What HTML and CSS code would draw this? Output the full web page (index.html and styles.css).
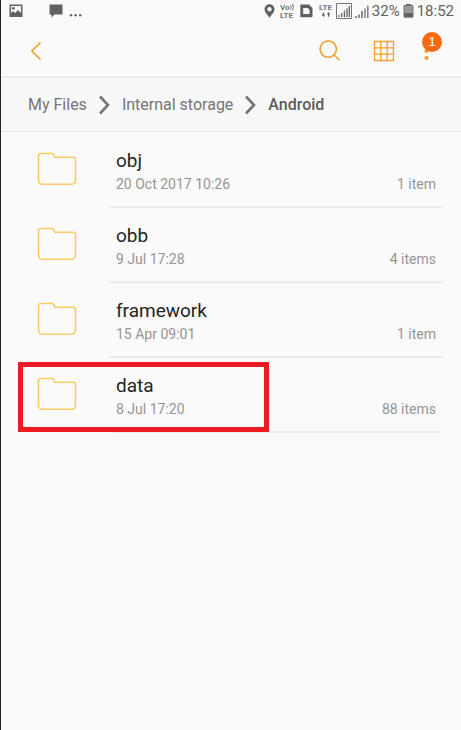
FILE: index.html
```html
<!DOCTYPE html>
<html lang="en">
<head>
    <meta charset="UTF-8">
    <meta name="viewport" content="width=device-width, initial-scale=1.0">
    <title>My Files</title>
    <link rel="stylesheet" href="styles.css">
</head>
<body>
    <!-- Shared shapes -->
    <svg class="sprite" aria-hidden="true">
        <symbol id="folder" viewBox="0 0 40 34">
            <path d="M1.5 3.5Q1.5 1.5 3.5 1.5H15Q16.5 1.5 17 3L17.7 5.2H36.5Q38.5 5.2 38.5 7.2V28Q38.5 32.3 34.2 32.3H5.8Q1.5 32.3 1.5 28Z" fill="none" stroke="#fccb68" stroke-width="1.6"/>
        </symbol>
        <symbol id="chevron" viewBox="0 0 11 20">
            <path d="M1 1.5L9 10L1 18.5" fill="none" stroke="#757575" stroke-width="2.6"/>
        </symbol>
    </svg>

    <!-- Status Bar -->
    <div class="status-bar">
        <div class="notifications">
            <svg width="14" height="14" viewBox="0 0 14 14">
                <path fill="#616161" fill-rule="evenodd" d="M1 0.5H13Q13.5 0.5 13.5 1V12.5Q13.5 13 13 13H1Q0.5 13 0.5 12.5V1Q0.5 0.5 1 0.5ZM2 2V9L4 7L6 9L9 6L12 9V2Z"/>
                <circle cx="4.3" cy="4.3" r="1.4" fill="#616161"/>
            </svg>
            <svg class="chat" width="14" height="14" viewBox="0 0 14 14">
                <path fill="#616161" d="M0.5 0.5H13.5V10.5H5.5L2.5 13.5V10.5H0.5Z"/>
            </svg>
            <svg width="14" height="14" viewBox="0 0 14 14">
                <g fill="#616161"><circle cx="3" cy="11.2" r="1.2"/><circle cx="7.6" cy="11.2" r="1.2"/><circle cx="12.2" cy="11.2" r="1.2"/></g>
            </svg>
        </div>
        <div class="indicators">
            <svg width="11" height="14" viewBox="0 0 11 14">
                <path fill="#616161" fill-rule="evenodd" d="M5.5 0.3A5 5 0 0 1 10.5 5.2C10.5 8.3 7.5 10.5 5.5 13.8C3.5 10.5 0.5 8.3 0.5 5.2A5 5 0 0 1 5.5 0.3ZM5.5 3A2.2 2.2 0 1 0 5.5 7.4A2.2 2.2 0 1 0 5.5 3Z"/>
            </svg>
            <svg width="15" height="20" viewBox="0 0 15 20">
                <text class="tiny" x="0" y="9">Vo</text>
                <path fill="none" stroke="#757575" d="M10.5 4Q11.8 6 10.5 8.5M12.5 3Q14.5 6 12.5 9.5"/>
                <text class="tiny" x="0" y="17">LTE</text>
            </svg>
            <svg width="14" height="14" viewBox="0 0 14 14">
                <path fill="#616161" fill-rule="evenodd" d="M1 0.5H9L12.5 4V12.5Q12.5 13.3 11.7 13.3H1Q0.3 13.3 0.3 12.5V1.2Q0.3 0.5 1 0.5ZM3.2 4V10H9.5V5.8L7.7 4Z"/>
            </svg>
        </div>
        <div class="network">
            <svg width="14" height="20" viewBox="0 0 14 20">
                <text class="tiny" x="0" y="9">LTE</text>
                <path fill="#616161" d="M4.4 16L2.6 13.5H3.8V11.5H5V13.5H6.2ZM9.6 11L11.4 13.5H10.2V15.8H9V13.5H7.8Z"/>
            </svg>
            <svg width="16" height="16" viewBox="0 0 16 16">
                <path fill="none" stroke="#757575" d="M0.5 0.5H15.5V15.5H0.5Z"/>
                <path fill="none" stroke="#616161" stroke-width="1.3" d="M3 12V14M5.7 10V14M8.4 7.5V14M11 5.5V14M13.3 3V14"/>
            </svg>
            <svg width="14" height="16" viewBox="0 0 14 16">
                <path fill="none" stroke="#757575" stroke-width="1.6" d="M1 13V15M4 11.5V15M7 8V15"/>
                <path fill="none" stroke="#757575" stroke-width="1.4" d="M10 5.5V15M12.8 2.5V15"/>
            </svg>
            <span>32%</span>
            <svg width="11" height="16" viewBox="0 0 11 16">
                <path fill="#9a9a9a" d="M1 2H10V11H1Z"/>
                <path fill="#616161" d="M3 1H8V2.2H3ZM1 10H10V13.5Q10 14.5 9 14.5H2Q1 14.5 1 13.5Z"/>
                <path fill="none" stroke="#757575" d="M1 2.5H10V14H1Z"/>
            </svg>
            <span>18:52</span>
        </div>
    </div>

    <!-- Toolbar -->
    <header class="toolbar">
        <button type="button" aria-label="Back">
            <svg width="24" height="24" viewBox="0 0 24 24">
                <path d="M17.5 3.5L8.8 12L17.5 20.5" fill="none" stroke="#f0a030" stroke-width="1.7"/>
            </svg>
        </button>
        <div class="actions">
            <button type="button" aria-label="Search">
                <svg width="24" height="24" viewBox="0 0 24 24">
                    <path d="M10.3 2A8.1 8.1 0 1 1 10.2 2ZM16 15.7L21.5 21.2" fill="none" stroke="#f0a030" stroke-width="1.6"/>
                </svg>
            </button>
            <button type="button" aria-label="Grid view">
                <svg width="24" height="24" viewBox="0 0 24 24">
                    <path d="M2.5 2.5H21.5V21.5H2.5ZM8.8 2.5V21.5M15.2 2.5V21.5M2.5 8.8H21.5M2.5 15.2H21.5" fill="none" stroke="#f0a030" stroke-width="1.3"/>
                </svg>
            </button>
            <button type="button" class="more" aria-label="More options">
                <svg width="24" height="24" viewBox="0 0 24 24">
                    <g fill="#f0a030"><circle cx="11.5" cy="5" r="2.1"/><circle cx="11.5" cy="12" r="2.1"/><circle cx="11.5" cy="19" r="2.1"/></g>
                </svg>
                <span class="badge">1</span>
            </button>
        </div>
    </header>

    <!-- Breadcrumb -->
    <nav class="breadcrumb" aria-label="Folder path">
        <a href="#">My Files</a>
        <svg width="11" height="20"><use href="#chevron"/></svg>
        <a href="#">Internal storage</a>
        <svg width="11" height="20"><use href="#chevron"/></svg>
        <a href="#" class="current" aria-current="page">Android</a>
    </nav>

    <!-- Folder List -->
    <main>
        <ul class="folder-list">
            <li>
                <svg class="folder" width="40" height="34"><use href="#folder"/></svg>
                <div class="details">
                    <h2>obj</h2>
                    <p><span>20 Oct 2017 10:26</span><span>1 item</span></p>
                </div>
            </li>
            <li>
                <svg class="folder" width="40" height="34"><use href="#folder"/></svg>
                <div class="details">
                    <h2>obb</h2>
                    <p><span>9 Jul 17:28</span><span>4 items</span></p>
                </div>
            </li>
            <li>
                <svg class="folder" width="40" height="34"><use href="#folder"/></svg>
                <div class="details">
                    <h2>framework</h2>
                    <p><span>15 Apr 09:01</span><span>1 item</span></p>
                </div>
            </li>
            <li class="highlighted">
                <svg class="folder" width="40" height="34"><use href="#folder"/></svg>
                <div class="details">
                    <h2>data</h2>
                    <p><span>8 Jul 17:20</span><span>88 items</span></p>
                </div>
            </li>
        </ul>
    </main>
</body>
</html>
```
FILE: styles.css
```css
/* General Styles */
*, *::after {
    box-sizing: border-box;
}

body {
    font-family: Roboto, sans-serif;
    margin: 0;
    min-height: 100vh;
    color: #252525;
    background: #fafafa;
    border-left: 1px solid #222222;
}

svg {
    display: block;
    flex-shrink: 0;
}

.sprite {
    position: absolute;
    width: 0;
    height: 0;
}

/* Status Bar */
.status-bar {
    display: flex;
    align-items: center;
    height: 24px;
    padding: 0 7px 2px 8px;
    font-size: 15px;
    color: #616161;
}

.notifications, .indicators, .network {
    display: flex;
    align-items: center;
}

.notifications {
    gap: 5px;
    margin-right: auto;
}

.chat {
    margin-left: 21px;
}

.indicators {
    gap: 5px;
    margin-right: 5px;
}

.network {
    gap: 3px;
}

.tiny {
    font-size: 8px;
    font-weight: 700;
    fill: #757575;
}

/* Toolbar */
.toolbar {
    display: flex;
    align-items: center;
    justify-content: space-between;
    height: 54px;
    padding: 2px 22px 0;
    border-bottom: 2px solid #ebebeb;
}

.toolbar button {
    padding: 0;
    border: 0;
    background: none;
    cursor: pointer;
}

.actions {
    display: flex;
    gap: 30px;
}

.more {
    position: relative;
    margin-left: -11px;
}

.badge {
    position: absolute;
    top: -7px;
    right: -3px;
    width: 20px;
    height: 20px;
    border-radius: 50%;
    background: #f96a10;
    color: #ffffff;
    font-size: 13px;
    line-height: 20px;
    text-align: center;
}

/* Breadcrumb */
.breadcrumb {
    display: flex;
    align-items: center;
    gap: 12px;
    height: 54px;
    padding: 0 27px;
    background: #f8f8f8;
    border-bottom: 1px solid #e8e8e8;
    font-size: 16px;
}

.breadcrumb a {
    color: #757575;
    text-decoration: none;
}

.breadcrumb .current {
    color: #5c5c5c;
    font-weight: 500;
}

/* Folder List */
.folder-list {
    margin: 0;
    padding: 1px 18px 0 36px;
    list-style: none;
}

.folder-list li {
    position: relative;
    display: flex;
    gap: 32px;
    height: 75px;
}

.folder {
    margin-top: 19px;
}

.details {
    flex: 1;
    padding: 15px 7px 0;
    border-bottom: 2px solid #ebebeb;
}

.details h2 {
    margin: 0;
    font-size: 19px;
    font-weight: 400;
    line-height: 26px;
}

.details p {
    display: flex;
    justify-content: space-between;
    margin: 0;
    color: #959595;
    font-size: 14px;
    line-height: 20px;
}

.highlighted::after {
    content: "";
    position: absolute;
    top: 4px;
    left: -19px;
    width: 251px;
    height: 70px;
    border: 5px solid #ed1c24;
}
```
